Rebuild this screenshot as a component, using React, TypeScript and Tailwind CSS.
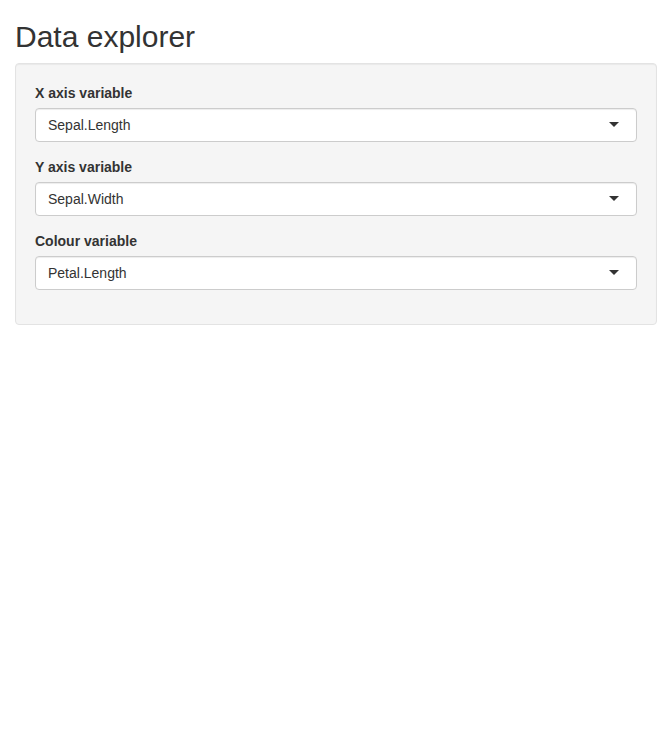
import React from 'react';

interface SelectFieldProps {
  label: string;
  value: string;
}

const SelectField: React.FC<SelectFieldProps> = ({ label, value }) => (
  <div className="mb-[15px]">
    <label className="block mb-[5px] text-[14px] leading-[20px] font-bold">{label}</label>
    <div className="relative h-[34px] bg-white border border-[#cccccc] rounded-[4px] px-[12px] py-[6px] shadow-[inset_0_1px_1px_rgba(0,0,0,0.075)]">
      <span className="block text-[14px] leading-[20px] text-[#333333]">{value}</span>
      <span className="absolute right-[17px] top-1/2 mt-[-3px] w-0 h-0 border-solid border-t-[5px] border-x-[5px] border-b-0 border-t-[#333333] border-x-transparent" />
    </div>
  </div>
);

export default function App() {
  return (
    <div
      className="min-h-screen bg-white px-[15px] text-[#333333]"
      style={{ fontFamily: '"Liberation Sans", Arial, sans-serif' }}
    >
      <h2 className="mt-[20px] mb-[10px] text-[30px] leading-[1.1] font-normal">Data explorer</h2>
      <div className="bg-[#f5f5f5] border border-[#e3e3e3] rounded-[4px] p-[19px] shadow-[inset_0_1px_1px_rgba(0,0,0,0.05)]">
        <SelectField label="X axis variable" value="Sepal.Length" />
        <SelectField label="Y axis variable" value="Sepal.Width" />
        <SelectField label="Colour variable" value="Petal.Length" />
      </div>
    </div>
  );
}
